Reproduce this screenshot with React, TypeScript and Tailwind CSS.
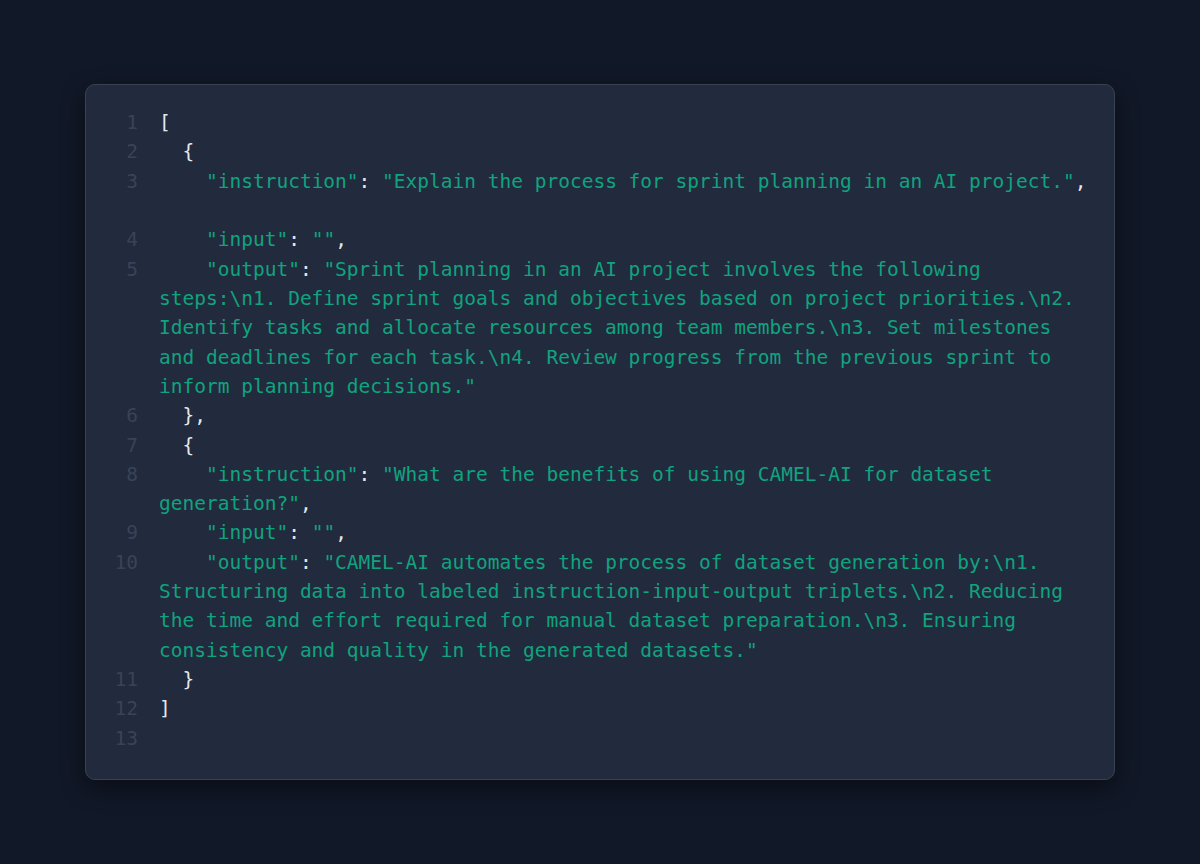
import React from "react";

type Tok = { t: string; c: "g" | "p" };
const g = (t: string): Tok => ({ t, c: "g" });
const p = (t: string): Tok => ({ t, c: "p" });

const lines: { toks: Tok[]; extraBlank?: boolean }[] = [
  { toks: [p("[")] },
  { toks: [p("  {")] },
  {
    toks: [
      p("    "),
      g('"instruction"'),
      p(": "),
      g('"Explain the process for sprint planning in an AI project."'),
      p(","),
    ],
    extraBlank: true,
  },
  { toks: [p("    "), g('"input"'), p(": "), g('""'), p(",")] },
  {
    toks: [
      p("    "),
      g('"output"'),
      p(": "),
      g(
        '"Sprint planning in an AI project involves the following steps:\\n1. Define sprint goals and objectives based on project priorities.\\n2. Identify tasks and allocate resources among team members.\\n3. Set milestones and deadlines for each task.\\n4. Review progress from the previous sprint to inform planning decisions."'
      ),
    ],
  },
  { toks: [p("  },")] },
  { toks: [p("  {")] },
  {
    toks: [
      p("    "),
      g('"instruction"'),
      p(": "),
      g('"What are the benefits of using CAMEL-AI for dataset generation?"'),
      p(","),
    ],
  },
  { toks: [p("    "), g('"input"'), p(": "), g('""'), p(",")] },
  {
    toks: [
      p("    "),
      g('"output"'),
      p(": "),
      g(
        '"CAMEL-AI automates the process of dataset generation by:\\n1. Structuring data into labeled instruction-input-output triplets.\\n2. Reducing the time and effort required for manual dataset preparation.\\n3. Ensuring consistency and quality in the generated datasets."'
      ),
    ],
  },
  { toks: [p("  }")] },
  { toks: [p("]")] },
  { toks: [] },
];

export default function App() {
  return (
    <div className="min-h-screen w-full bg-[#111827] flex items-center justify-center">
      <div
        className="w-[1030px] rounded-[10px] border border-[#394255] bg-[#222a3d] pl-6 pr-[22px] pt-[23px] pb-[26px] shadow-[0_8px_24px_rgba(0,0,0,0.45)] text-[19.5px] leading-[29.33px]"
        style={{ fontFamily: '"DejaVu Sans Mono", "Liberation Mono", monospace' }}
      >
        {lines.map((ln, i) => (
          <div key={i} className="flex">
            <div className="w-[28px] shrink-0 text-right text-[#3a4356] select-none">
              {i + 1}
            </div>
            <div className="ml-[21px] flex-1 min-w-0 whitespace-pre-wrap break-words">
              {ln.toks.map((tk, j) => (
                <span
                  key={j}
                  className={tk.c === "g" ? "text-[#10a37f]" : "text-[#e5e7eb]"}
                >
                  {tk.t}
                </span>
              ))}
              {ln.extraBlank ? (
                <>
                  <br />
                  {"\u200b"}
                </>
              ) : null}
              {ln.toks.length === 0 ? "\u200b" : null}
            </div>
          </div>
        ))}
      </div>
    </div>
  );
}
